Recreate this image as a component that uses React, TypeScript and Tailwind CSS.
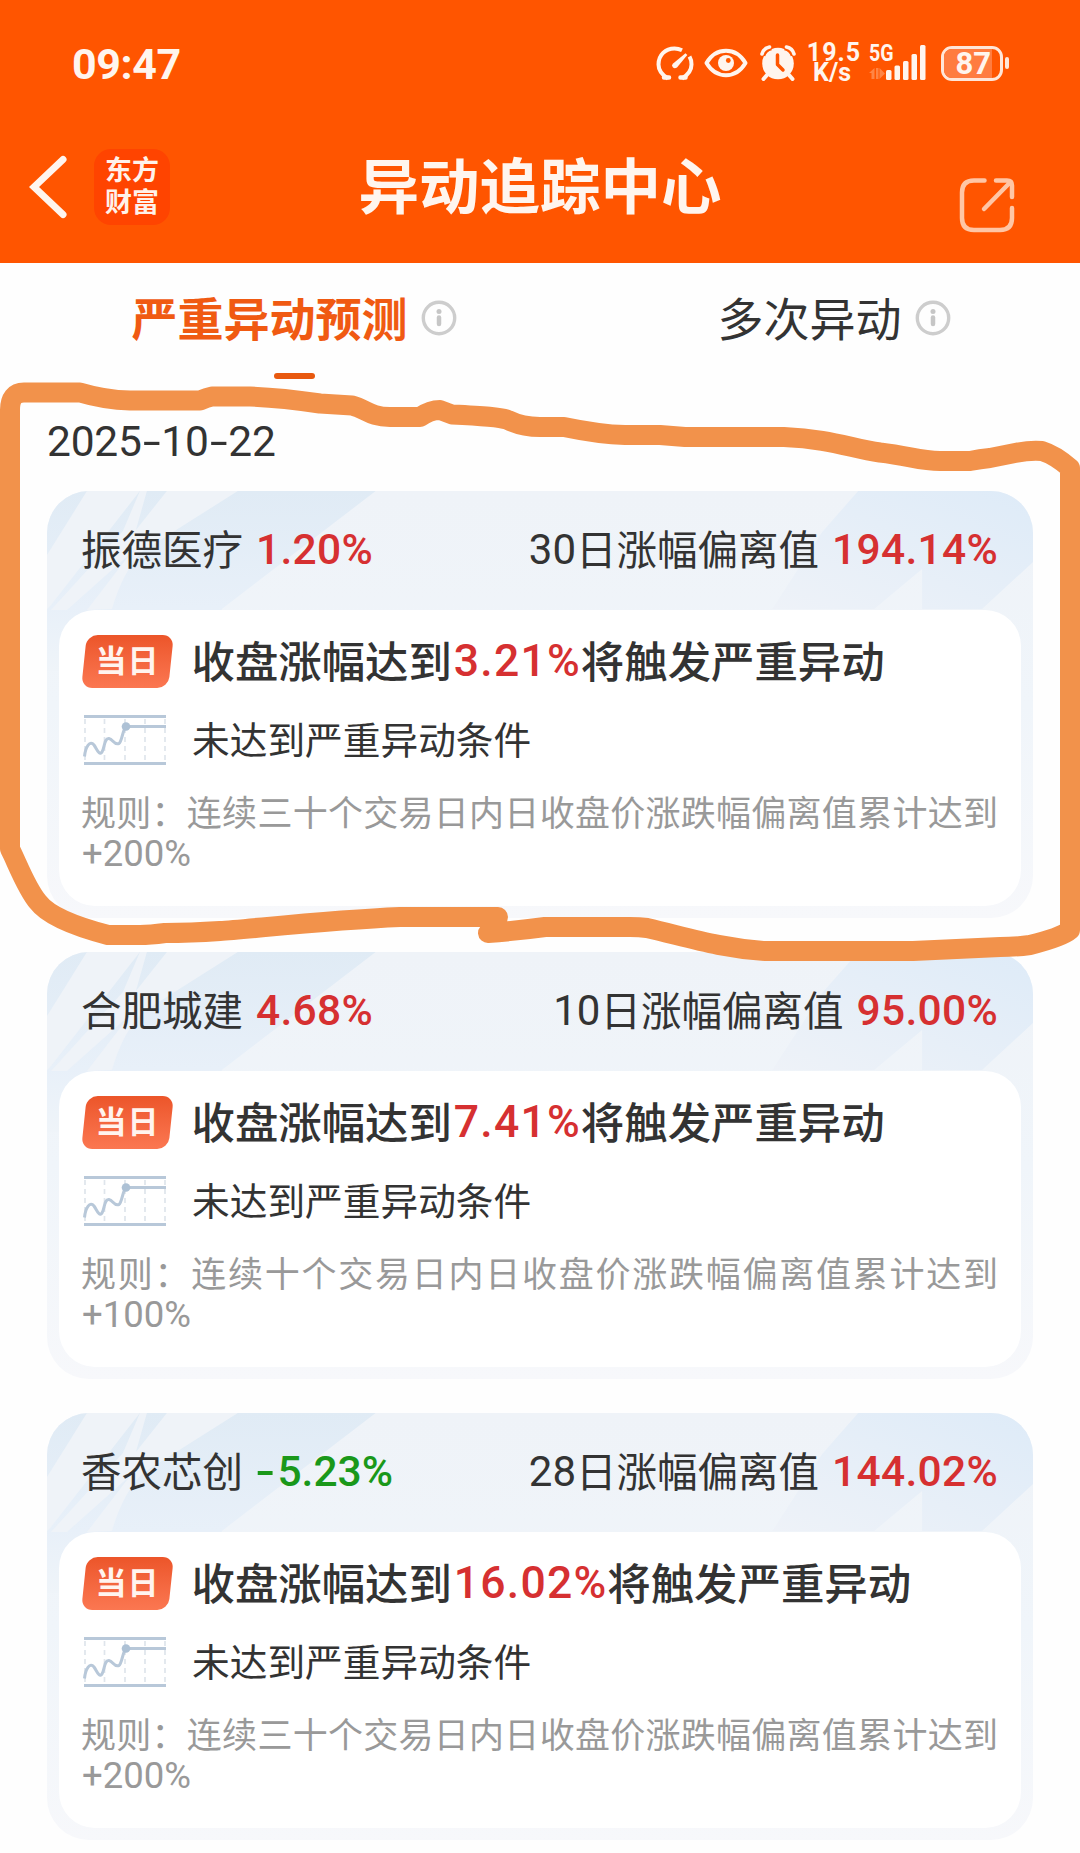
import React from "react";

type Stock = {
  name: string;
  change: string;
  down?: boolean;
  days: string;
  deviation: string;
  trigger: string;
  rule: string;
  limit: string;
};

const stocks: Stock[] = [
  {
    name: "振德医疗",
    change: "1.20%",
    days: "30",
    deviation: "194.14%",
    trigger: "3.21%",
    rule: "规则：连续三十个交易日内日收盘价涨跌幅偏离值累计达到",
    limit: "+200%",
  },
  {
    name: "合肥城建",
    change: "4.68%",
    days: "10",
    deviation: "95.00%",
    trigger: "7.41%",
    rule: "规则：连续十个交易日内日收盘价涨跌幅偏离值累计达到",
    limit: "+100%",
  },
  {
    name: "香农芯创",
    change: "-5.23%",
    down: true,
    days: "28",
    deviation: "144.02%",
    trigger: "16.02%",
    rule: "规则：连续三十个交易日内日收盘价涨跌幅偏离值累计达到",
    limit: "+200%",
  },
];

function Hyphen({ narrow }: { narrow?: boolean }) {
  return (
    <span className={narrow ? "mr-[5px] inline-block scale-x-[1.35]" : "mx-[4px] inline-block scale-x-[1.5]"}>-</span>
  );
}

function StatusBar() {
  return (
    <div className="flex h-[126px] items-center pl-[72px] pr-[71px] text-[#fff5ee]">
      <span className="mt-[2px] text-[43px] leading-none font-bold tracking-[-0.4px]">09:47</span>
      <div className="ml-auto flex items-center">
        <svg className="h-[36px] w-[38px]" viewBox="0 0 38 36" fill="none" stroke="currentColor" strokeWidth="4" strokeLinecap="butt">
          <path d="M12 33.5C4.500 29 2.500 24 2.500 19.500C2.500 10 9.500 3.500 18.500 3.500C21.500 3.500 24 4.300 26 5.300" />
          <path d="M33.500 11.500C35 14 35.500 17 35.500 19.500C35.500 24 33.500 29 26 33.500" />
          <path d="M8 32.500h5M24.500 32.500h5" strokeWidth="4.500" strokeLinecap="round" />
          <path d="M29.500 8.200L31.300 10L21 22.500Q18.500 24 16.800 22.300T16.800 18.800Z" fill="currentColor" stroke="none" />
        </svg>
        <svg className="ml-[10px] h-[30px] w-[44px]" viewBox="0 0 44 30" fill="none">
          <path d="M2.500 15C7 7.500 13.500 2.800 22 2.800S37 7.500 41.500 15C37 22.500 30.500 27.200 22 27.200S7 22.500 2.500 15Z" stroke="currentColor" strokeWidth="4" strokeLinejoin="round" />
          <circle cx="22" cy="15" r="8" fill="currentColor" />
          <circle cx="24.300" cy="12.500" r="2.400" fill="#ff5900" />
        </svg>
        <svg className="ml-[12px] h-[36px] w-[36px]" viewBox="0 0 36 36" fill="none" stroke="currentColor">
          <path d="M7 30L3.500 34M29 30L32.500 34" strokeWidth="4" strokeLinecap="round" />
          <circle cx="18" cy="18.500" r="15.800" fill="currentColor" stroke="none" />
          <path d="M1.800 10.500Q3.500 3.500 11 1.800M34.200 10.500Q32.500 3.500 25 1.800" stroke="#ff5500" strokeWidth="7" />
          <path d="M2 9Q3.500 3.300 9.500 2M34 9Q32.500 3.300 26.500 2" strokeWidth="3.600" strokeLinecap="round" />
          <path d="M17.500 10V19.500L23 25" stroke="#ff5500" strokeWidth="3.500" strokeLinecap="round" strokeLinejoin="round" />
        </svg>
        <div className="ml-[12px] flex w-[52px] flex-col items-center text-[25px] leading-[20.5px] font-bold">
          <span className="tracking-[1px]">19.5</span>
          <span className="mr-[4px]">K/s</span>
        </div>
        <div className="relative ml-[9px] h-[36px] w-[58px]">
          <span className="absolute -top-[1px] left-0 origin-left scale-x-[0.85] text-[23px] leading-[20px] font-bold">5G</span>
          <svg className="h-[36px] w-[58px]" viewBox="0 0 58 36">
            <g fill="#ff8545">
              <path d="M0 28L5.500 23V34H2.500V28ZM7 23H9.500V34H7ZM10.500 23L16 28.500L10.500 34Z" />
            </g>
            <g fill="currentColor">
              <rect x="17" y="25" width="5.500" height="10" rx="1.500" />
              <rect x="25.500" y="20.500" width="5.500" height="14.500" rx="1.500" />
              <rect x="34" y="16" width="5.500" height="19" rx="1.500" />
              <rect x="42.500" y="9" width="5.500" height="26" rx="1.500" />
              <rect x="51" y="0" width="5.500" height="35" rx="1.500" />
            </g>
          </svg>
        </div>
        <div className="ml-[14px] flex h-[35px] w-[62px] overflow-hidden rounded-[11px] border-[3px] border-[#ffe6d8]">
          <div className="flex w-[48px] items-center justify-end bg-[#ff7c40] pr-[1px]">
            <span className="text-[31px] leading-none font-bold">87</span>
          </div>
        </div>
        <div className="ml-[2px] h-[12px] w-[4px] rounded-[2px] bg-[#ffe6d8]" />
      </div>
    </div>
  );
}

function NavBar() {
  return (
    <div className="grid h-[122px] grid-cols-[1fr_auto_1fr] items-center">
      <div className="flex items-center pl-[29px]">
        <svg className="h-[64px] w-[40px]" viewBox="0 0 40 64" fill="none" stroke="#fff5ee" strokeWidth="7" strokeLinecap="round">
          <path d="M34 4.500L5 32L34 59.500" strokeLinejoin="miter" />
        </svg>
        <div className="ml-[25px] flex h-[76px] w-[76px] flex-col items-center justify-center rounded-[17px] bg-[#ff4400] text-[27px] leading-[32px] font-bold text-[#fff2ea]">
          <span>东方</span>
          <span>财富</span>
        </div>
      </div>
      <h1 className="mt-[5px] text-[60.5px] leading-none font-bold text-[#fff5ee]">异动追踪中心</h1>
      <svg className="mt-[36px] mr-[65px] h-[56px] w-[56px] justify-self-end" viewBox="0 0 56 56" fill="none" stroke="#ffc6a5" strokeWidth="4.500" strokeLinecap="round" strokeLinejoin="round">
        <path d="M25.500 3.500H15Q3 3.500 3 15.500V41Q3 53 15 53H41Q53 53 53 41V31" />
        <path d="M37 3.500H48Q53 3.500 53 8.500V20M51 5.500L25 32" />
      </svg>
    </div>
  );
}

function InfoIcon() {
  return (
    <svg className="ml-[13px] h-[36px] w-[36px]" viewBox="0 0 36 36" fill="none">
      <circle cx="18" cy="18" r="15.700" stroke="#cdcdcd" strokeWidth="3.400" />
      <circle cx="18" cy="11.500" r="2.500" fill="#c6c6c6" />
      <path d="M18 17.500V24" stroke="#c6c6c6" strokeWidth="4.500" strokeLinecap="round" />
    </svg>
  );
}

function Tabs() {
  return (
    <div className="grid grid-cols-2">
      <div className="flex flex-col items-center pl-[48px]">
        <div className="flex h-[110px] items-center">
          <span className="mt-[3px] text-[46px] leading-none font-bold text-[#f05a12]">严重异动预测</span>
          <InfoIcon />
        </div>
        <div className="h-[6px] w-[41px] rounded-full bg-[#e8590f]" />
      </div>
      <div className="flex flex-col items-center pl-[48px]">
        <div className="flex h-[110px] items-center">
          <span className="mt-[3px] text-[46px] leading-none text-[#333]">多次异动</span>
          <InfoIcon />
        </div>
      </div>
    </div>
  );
}

function CardArt() {
  return (
    <svg className="absolute inset-x-0 top-0 h-[180px] w-full" viewBox="0 0 987 180" preserveAspectRatio="none">
      <defs>
        <linearGradient id="artLeft" x1="0" y1="0" x2="0" y2="1">
          <stop offset="0" stopColor="#e0ebf5" />
          <stop offset="0.650" stopColor="#e8f0f9" />
          <stop offset="1" stopColor="#eff4f9" />
        </linearGradient>
        <linearGradient id="artRight" x1="1" y1="0" x2="0" y2="1">
          <stop offset="0" stopColor="#deebf8" />
          <stop offset="1" stopColor="#eef2f8" />
        </linearGradient>
      </defs>
      <path d="M0 0H329L175 118V180H0Z" fill="url(#artLeft)" />
      <path d="M40 0H93L4 114L0 118V64Z" fill="#eff3f8" />
      <path d="M93 0H100L89 39L120 0H191L96 60Q76 80 65 118L40 119L84 62L20 119H4L76 40Z" fill="#eff3f8" />
      <path d="M812 0H987V71L936 118H876V78L828 118H726L776 41Z" fill="url(#artRight)" />
    </svg>
  );
}

function TrendIcon() {
  return (
    <svg className="h-[52px] w-[84px]" viewBox="0 0 84 52" fill="none" stroke="#b8c8d9">
      <path d="M3 5V48M22.500 5V48M43 5V48M63 5V48M83 5V48" stroke="#dfe5ec" strokeWidth="1.700" strokeDasharray="5 4" />
      <path d="M2 2.500H84M2 49.500H84" strokeWidth="2.800" />
      <path d="M2.500 42.500C3.500 32.500 8 26 12 31C15 35 17 42 20 38C23 33 22 24 27 24.500C31 25 32 31.500 37 29.500C40 27.500 41 14.500 44 12.500H84" strokeWidth="3" />
      <circle cx="44" cy="12.500" r="4.300" fill="#adc1d5" stroke="none" />
    </svg>
  );
}

function StockCard({ stock }: { stock: Stock }) {
  return (
    <section className="relative h-[427px] overflow-hidden rounded-[42px] bg-linear-to-b from-[#eff3f8] via-[#f0f5fa] to-[#f7f8fb] px-[12px] pb-[12px]">
      <CardArt />
      <div className="relative flex h-[119px] items-center justify-between pr-[23px] pl-[22px] text-[40.5px] leading-none text-[#333]">
        <div className="flex items-baseline">
          <span className="relative top-px">{stock.name}</span>
          <span className={stock.down ? "ml-[15px] text-[42.5px] font-medium text-[#1a981a]" : "ml-[13px] text-[42.5px] font-medium tracking-[0.3px] text-[#d63031]"}>
            {stock.down ? (
              <>
                <Hyphen narrow />
                {stock.change.slice(1)}
              </>
            ) : (
              stock.change
            )}
          </span>
        </div>
        <div className="flex items-baseline">
          <span className="text-[42px]">{stock.days}</span>
          <span className="relative top-px">日涨幅偏离值</span>
          <span className="ml-[13px] text-[42.5px] font-medium tracking-[0.3px] text-[#d63031]">{stock.deviation}</span>
        </div>
      </div>
      <div className="relative h-[296px] rounded-[36px] bg-white px-[23px] pt-[21px]">
        <div className="flex h-[60px] items-center">
          <div className="relative flex h-[53px] w-[91px] items-center justify-center">
            <div className="absolute inset-x-[2px] inset-y-0 -skew-x-6 rounded-[11px] bg-linear-to-b from-[#ec5529] to-[#fb7751]" />
            <span className="relative text-[31px] leading-none font-bold tracking-[1px] text-[#fff4ef]">当日</span>
          </div>
          <div className="ml-[18.5px] flex items-baseline text-[43.4px] leading-none font-medium text-[#333]">
            <span className="relative top-[2px]">收盘涨幅达到</span>
            <span className="ml-[2px] text-[44.5px] tracking-[1.2px] text-[#d63031]">{stock.trigger}</span>
            <span className="relative top-[2px]">将触发严重异动</span>
          </div>
        </div>
        <div className="mt-[19px] flex h-[60px] items-center">
          <TrendIcon />
          <span className="relative top-[2px] ml-[26px] text-[37.7px] leading-none text-[#333]">未达到严重异动条件</span>
        </div>
        <div className="mt-[23px] text-[35px] leading-[41px] text-[#999]">
          <p className="relative top-px -ml-px whitespace-nowrap [text-align-last:justify]">{stock.rule}</p>
          <p className="relative -top-px text-[36.5px]">{stock.limit}</p>
        </div>
      </div>
    </section>
  );
}

function MarkerStroke() {
  return (
    <svg className="pointer-events-none absolute top-0 left-0 h-[1853px] w-[1080px]" viewBox="0 0 1080 1853" fill="none" stroke="#f2924b" strokeWidth="20" strokeLinecap="round" strokeLinejoin="round">
      <path d="M498 917H400C330 920 250 929 220 931C190 933 180 933 165 933Q150 935 140 935H108C85 929 50 918 38 902C26 888 16 860 10 849V410Q10 392.500 24 392.500H80Q105 400 130 400.500H200Q207 397.500 212 396.500H250Q280 397.500 320 403.500L352 405.500C366 409 370 417 390 417H420Q430 410 440 410L452 414.500C485 416 500 417 508 420Q522 427 540 427H564Q600 434.500 625 435H660L685 437H784C830 439 850 448 880 452.500C910 456 920 461 940 461H970Q980 459 990 458Q1005 455 1015 453Q1030 450 1042 451Q1055 455 1070 468V930Q1062 937 1030 945Q1015 947 1000 947Q960 949 913 951H765C720 948 690 938 647 928Q640 927 630 927H545Q515 931 488 933" />
    </svg>
  );
}

export default function App() {
  return (
    <main className="relative h-[1853px] w-[1080px] overflow-hidden bg-[#fefefe] font-[Roboto,'Noto_Sans_CJK_SC',sans-serif]">
      <header className="h-[263px] bg-[#ff5500]">
        <StatusBar />
        <NavBar />
      </header>
      <Tabs />
      <div className="px-[47px]">
        <p className="mt-[41px] mb-[27px] text-[42.5px] leading-[44px] tracking-[-0.2px] text-[#333]">
          2025
          <Hyphen />
          10
          <Hyphen />
          22
        </p>
        <div className="flex flex-col gap-[34px]">
          {stocks.map((stock) => (
            <StockCard key={stock.name} stock={stock} />
          ))}
        </div>
      </div>
      <MarkerStroke />
    </main>
  );
}
